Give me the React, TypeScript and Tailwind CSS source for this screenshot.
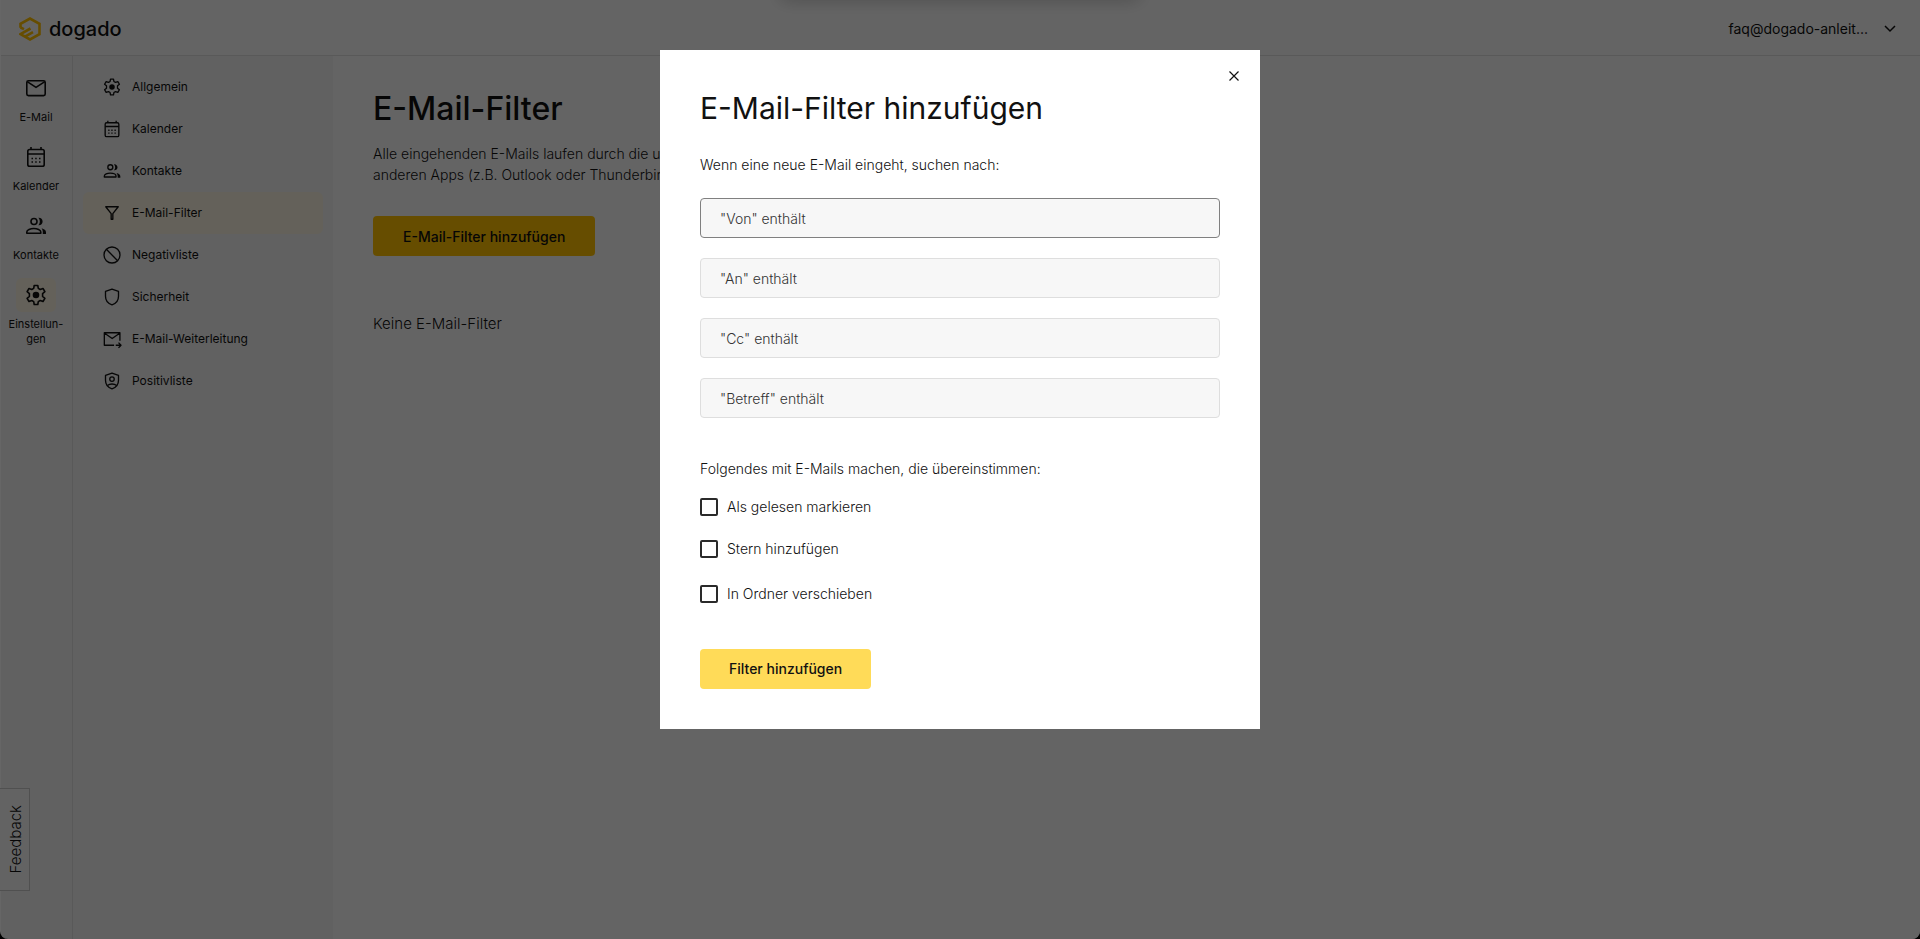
import { useState } from 'react'

const navItems = [
  { label: 'E-Mail', icon: 'mail' },
  { label: 'Kalender', icon: 'calendar' },
  { label: 'Kontakte', icon: 'contacts' },
  { label: 'Einstellun-gen', icon: 'settings', active: true },
]

const settingsItems = [
  { label: 'Allgemein', icon: 'settings' },
  { label: 'Kalender', icon: 'calendar' },
  { label: 'Kontakte', icon: 'contacts' },
  { label: 'E-Mail-Filter', icon: 'filter', active: true },
  { label: 'Negativliste', icon: 'block' },
  { label: 'Sicherheit', icon: 'shield' },
  { label: 'E-Mail-Weiterleitung', icon: 'forward' },
  { label: 'Positivliste', icon: 'shieldUser' },
]

const conditions = [
  { id: 'from', label: '"Von" enthält' },
  { id: 'to', label: '"An" enthält' },
  { id: 'cc', label: '"Cc" enthält' },
  { id: 'subject', label: '"Betreff" enthält' },
]

const Icon = ({ name, className }: { name: string; className: string }) => (
  <svg
    className={className}
    viewBox="0 0 24 24"
    fill="none"
    stroke="currentColor"
    strokeWidth={1.6}
    strokeLinejoin="round"
    aria-hidden="true"
  >
    {name === 'mail' && (
      <>
        <rect x="2.8" y="4.8" width="18.4" height="14.8" rx="1.6" />
        <path d="M3.2 5.6 12 11.4l8.8-5.8" />
      </>
    )}
    {name === 'calendar' && (
      <>
        <rect x="3.8" y="4.5" width="16.4" height="16.7" rx="1.8" />
        <path d="M3.8 9h16.4M7 2v2.5M17 2v2.5" />
        <path d="M7.5 13.5H9M11.2 13.5h1.5M15 13.5h1.5M7.5 17H9M11.2 17h1.5M15 17h1.5" />
      </>
    )}
    {name === 'contacts' && (
      <>
        <circle cx="10" cy="7.5" r="3" />
        <path d="M2.8 19.2V18c0-2.2 3.6-3.5 7-3.5s7 1.3 7 3.5v1.2z" />
        <path
          d="M14.3 11.2c1-1 1.5-2.3 1.5-3.7s-.5-2.7-1.5-3.7c2.5-.3 4.3 1.500 4.300 3.700s-1.800 4-4.300 3.700zM17.500 14.300c2.700.8 4.500 2 4.500 3.900V20h-3.200v-2c0-1.500-.5-2.700-1.300-3.700z"
          fill="currentColor"
          stroke="none"
        />
      </>
    )}
    {name === 'settings' && (
      <>
        <path d="M10.2 2.5h3.6l.5 2.9 1.9 1.1 2.8-1 1.9 3.2-2.3 1.9v2.8l2.3 1.9-1.9 3.2-2.8-1-1.9 1.1-.5 2.9h-3.6l-.5-2.9-1.9-1.1-2.8 1-1.9-3.2 2.3-1.9v-2.8L3.1 8.7 5 5.5l2.8 1 1.9-1.1z" />
        <circle cx="12" cy="12" r="3.3" fill="currentColor" stroke="none" />
      </>
    )}
    {name === 'filter' && <path d="M4.5 4.5h15L13 12.8v6.7h-2v-6.7z" />}
    {name === 'block' && (
      <>
        <circle cx="12" cy="12" r="9.6" />
        <path d="m5.2 5.2 13.6 13.6" />
      </>
    )}
    {name === 'shield' && <path d="M12 2.5 4.2 5.3v5.9c0 4.8 3.3 8.9 7.8 10.2 4.5-1.3 7.8-5.4 7.8-10.2V5.3z" />}
    {name === 'shieldUser' && (
      <>
        <path d="M12 2.5 4.2 5.3v5.9c0 4.8 3.3 8.9 7.8 10.2 4.5-1.3 7.8-5.4 7.8-10.2V5.3z" />
        <circle cx="12" cy="9.7" r="2.7" />
        <path d="M6.5 17.5c3-2.6 8-2.6 11 0" />
      </>
    )}
    {name === 'forward' && (
      <>
        <path d="M14.5 19.5H2.8v-15h18.7V14M3.2 5l9 6.5 9-6.5" />
        <path d="M16.5 19.5h6M19.8 16.3l3 3.2-3 3.2" />
      </>
    )}
  </svg>
)

const Header = () => (
  <header className="flex h-14 items-center justify-between border-b border-[#dedede] bg-[#fbfbfb] pt-[3px] pr-6 pl-[18px]">
    <a href="#start" className="flex items-center gap-2">
      <svg className="h-6 w-[22px]" viewBox="0 0 22 24" fill="none" stroke="#ffc000" strokeWidth={2.6} aria-hidden="true">
        <path d="M1.5 10.8V6.8L11 1.5l9.5 5.3v10.4L11 22.5l-9.5-5.3 10-5.7" />
        <path d="M1.5 10.5 5 12.2M6 19.7l8-4.6" />
      </svg>
      <span className="text-xl leading-7 font-medium">dogado</span>
    </a>
    <button type="button" className="flex items-center gap-4 text-sm font-normal">
      faq@dogado-anleit...
      <svg className="h-3 w-3" viewBox="0 0 12 12" fill="none" stroke="currentColor" strokeWidth={1.5} aria-hidden="true">
        <path d="m1 3 5 5 5-5" />
      </svg>
    </button>
  </header>
)

const NavRail = () => (
  <nav aria-label="Hauptnavigation" className="w-[72px] shrink-0 border-r border-[#dedede] pt-[15px] pr-2 pl-[7px]">
    {navItems.map((item) => (
      <a
        key={item.label}
        href="#app"
        className="mb-[15px] flex flex-col items-center gap-[5px] text-center text-[11px] leading-[15px] font-normal"
      >
        <span
          className={
            item.active
              ? 'flex h-[34px] w-10 items-center justify-center rounded-md bg-[#faf3e0]'
              : 'flex h-[34px] w-10 items-center justify-center'
          }
        >
          <Icon name={item.icon} className="h-6 w-6" />
        </span>
        {item.label}
      </a>
    ))}
  </nav>
)

const SettingsNav = () => (
  <nav aria-label="Einstellungen" className="w-[260px] shrink-0 px-[10px] pt-[10px]">
    {settingsItems.map((item) => (
      <a
        key={item.label}
        href="#einstellung"
        className={
          item.active
            ? 'flex h-[42px] items-center gap-[10px] rounded-md bg-[#faf3e0] pl-[19px] text-xs font-normal'
            : 'flex h-[42px] items-center gap-[10px] pl-[19px] text-xs font-normal'
        }
      >
        <Icon name={item.icon} className="h-5 w-5" />
        {item.label}
      </a>
    ))}
  </nav>
)

const FilterPage = () => (
  <main className="flex-1 bg-[#fbfbfb] px-10 pt-[33px]">
    <h1 className="text-[32px] leading-10 font-medium">E-Mail-Filter</h1>
    <p className="mt-[14px] text-sm leading-[21px]">
      Alle eingehenden E-Mails laufen durch die unten
      <br />
      anderen Apps (z.B. Outlook oder Thunderbird)
    </p>
    <button type="button" className="mt-[31px] h-10 rounded bg-[#ffc000] px-[30px] pt-px text-sm font-medium">
      E-Mail-Filter hinzufügen
    </button>
    <p className="mt-[57px] text-[15px] leading-[22px]">Keine E-Mail-Filter</p>
  </main>
)

const FilterDialog = () => {
  const [actions, setActions] = useState({ read: false, star: false, move: false })
  const toggle = (key: keyof typeof actions) => setActions({ ...actions, [key]: !actions[key] })
  const box = 'h-[18px] w-[18px] appearance-none rounded-xs border-2 border-[#2a2a2a] checked:bg-[#ffc000]'

  return (
    <form
      role="dialog"
      aria-modal="true"
      aria-labelledby="dialog-title"
      className="relative w-full max-w-[600px] bg-white p-10 text-sm"
      onSubmit={(e) => e.preventDefault()}
    >
      <button type="button" aria-label="Schließen" className="absolute top-4 right-4 flex h-5 w-5 items-center justify-center">
        <svg className="h-[10px] w-[10px]" viewBox="0 0 10 10" stroke="currentColor" strokeWidth={1.2} aria-hidden="true">
          <path d="m0.5 0.5 9 9M9.5 0.5l-9 9" />
        </svg>
      </button>

      <h2 id="dialog-title" className="text-[30px] leading-9 font-normal">
        E-Mail-Filter hinzufügen
      </h2>
      <p className="mt-[29px] leading-5">Wenn eine neue E-Mail eingeht, suchen nach:</p>

      <div className="mt-[23px] flex flex-col gap-5">
        {conditions.map((condition, index) => (
          <input
            key={condition.id}
            type="text"
            aria-label={condition.label}
            placeholder={condition.label}
            className={
              index === 0
                ? 'h-10 w-full rounded border border-[#808080] bg-[#f7f7f7] px-[19px] outline-none placeholder:text-[#333]'
                : 'h-10 w-full rounded border border-[#dedede] bg-[#f7f7f7] px-[19px] outline-none placeholder:text-[#333]'
            }
          />
        ))}
      </div>

      <fieldset className="mt-[41px]">
        <legend className="leading-5">Folgendes mit E-Mails machen, die übereinstimmen:</legend>
        <label className="mt-[18px] flex items-center gap-[9px] leading-5">
          <input type="checkbox" className={box} checked={actions.read} onChange={() => toggle('read')} />
          Als gelesen markieren
        </label>
        <label className="mt-[22px] flex items-center gap-[9px] leading-5">
          <input type="checkbox" className={box} checked={actions.star} onChange={() => toggle('star')} />
          Stern hinzufügen
        </label>
        <label className="mt-[25px] flex items-center gap-[9px] leading-5">
          <input type="checkbox" className={box} checked={actions.move} onChange={() => toggle('move')} />
          In Ordner verschieben
        </label>
      </fieldset>

      <button type="submit" className="mt-[45px] h-10 rounded bg-[#ffdb58] px-[29px] font-medium">
        Filter hinzufügen
      </button>
    </form>
  )
}

const App = () => (
  <div className="bg-black font-['Inter','Liberation_Sans',sans-serif] font-light text-[#111]">
    <div className="flex min-h-screen flex-col overflow-hidden rounded-b-lg border-l border-white bg-[#f2f2f2]">
      <Header />
      <div className="flex flex-1">
        <NavRail />
        <SettingsNav />
        <FilterPage />
      </div>
    </div>

    <button
      type="button"
      className="fixed bottom-12 left-0 flex h-[103px] w-[30px] items-center justify-center border border-l-0 border-[#c8c8c8] bg-[#f7f7f7] pl-[3px] text-[15px] [writing-mode:sideways-lr]"
    >
      Feedback
    </button>

    <div className="fixed inset-0 flex items-start justify-center bg-black/60 pt-[50px]">
      <FilterDialog />
    </div>
    <div className="fixed -top-5 left-1/2 h-5 w-[360px] -translate-x-1/2 shadow-[0_0_20px_rgba(0,0,0,0.25)]" />
  </div>
)

export default App
